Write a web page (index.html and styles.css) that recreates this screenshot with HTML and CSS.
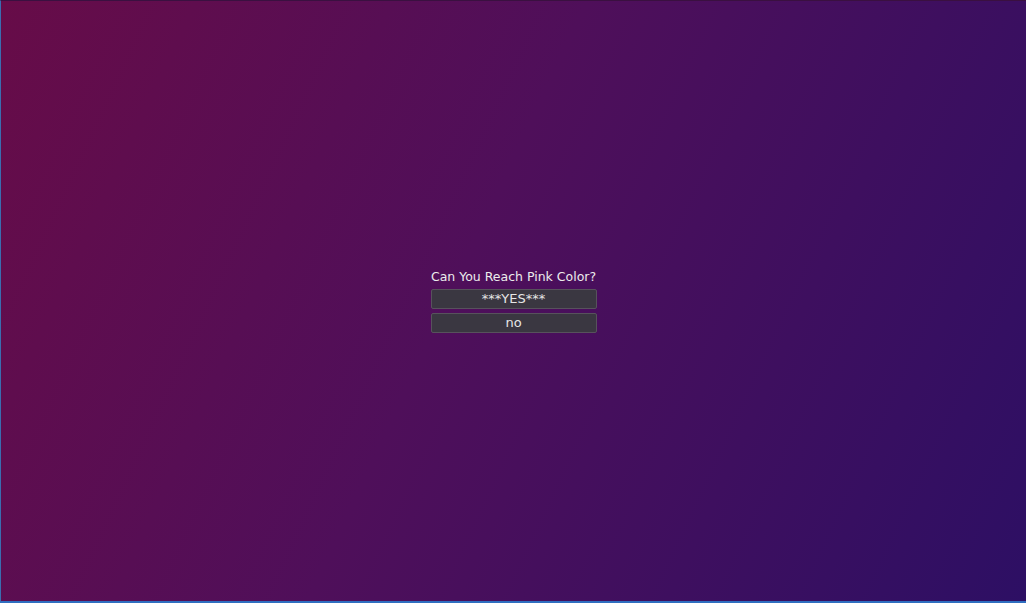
FILE: index.html
```html
<!DOCTYPE html>
<html>
<head>
<meta charset="utf-8">
<link rel="stylesheet" href="styles.css">
</head>
<body>
<div class="screen">
  <div class="dialog">
    <div class="title">Can You Reach Pink Color?</div>
    <button class="btn">***YES***</button>
    <button class="btn">no</button>
  </div>
</div>
</body>
</html>
```
FILE: styles.css
```css
html, body {
  margin: 0;
  padding: 0;
  width: 100%;
  height: 100%;
  overflow: hidden;
}
.screen {
  box-sizing: border-box;
  width: 1026px;
  height: 603px;
  border-left: 1px solid #3a6db0;
  border-top: 1px solid #3a1040;
  border-bottom: 2px solid #2f6ec0;
  background: linear-gradient(115deg, #670c48 0%, #4f0f5a 45%, #2d0f64 100%);
  display: flex;
  align-items: center;
  justify-content: center;
  font-family: "DejaVu Sans", sans-serif;
}
.dialog {
  width: 166px;
  display: flex;
  flex-direction: column;
  gap: 4px;
  margin-bottom: 1px;
}
.title {
  color: #ececec;
  font-size: 12.5px;
  text-align: center;
  line-height: 16px;
  white-space: nowrap;
}
.btn {
  height: 20px;
  padding: 0;
  margin: 0;
  background: #3a3741;
  border: 1px solid #57525c;
  border-radius: 2px;
  color: #e6e6e6;
  font-family: "DejaVu Sans", sans-serif;
  font-size: 13px;
  line-height: 18px;
}
```
